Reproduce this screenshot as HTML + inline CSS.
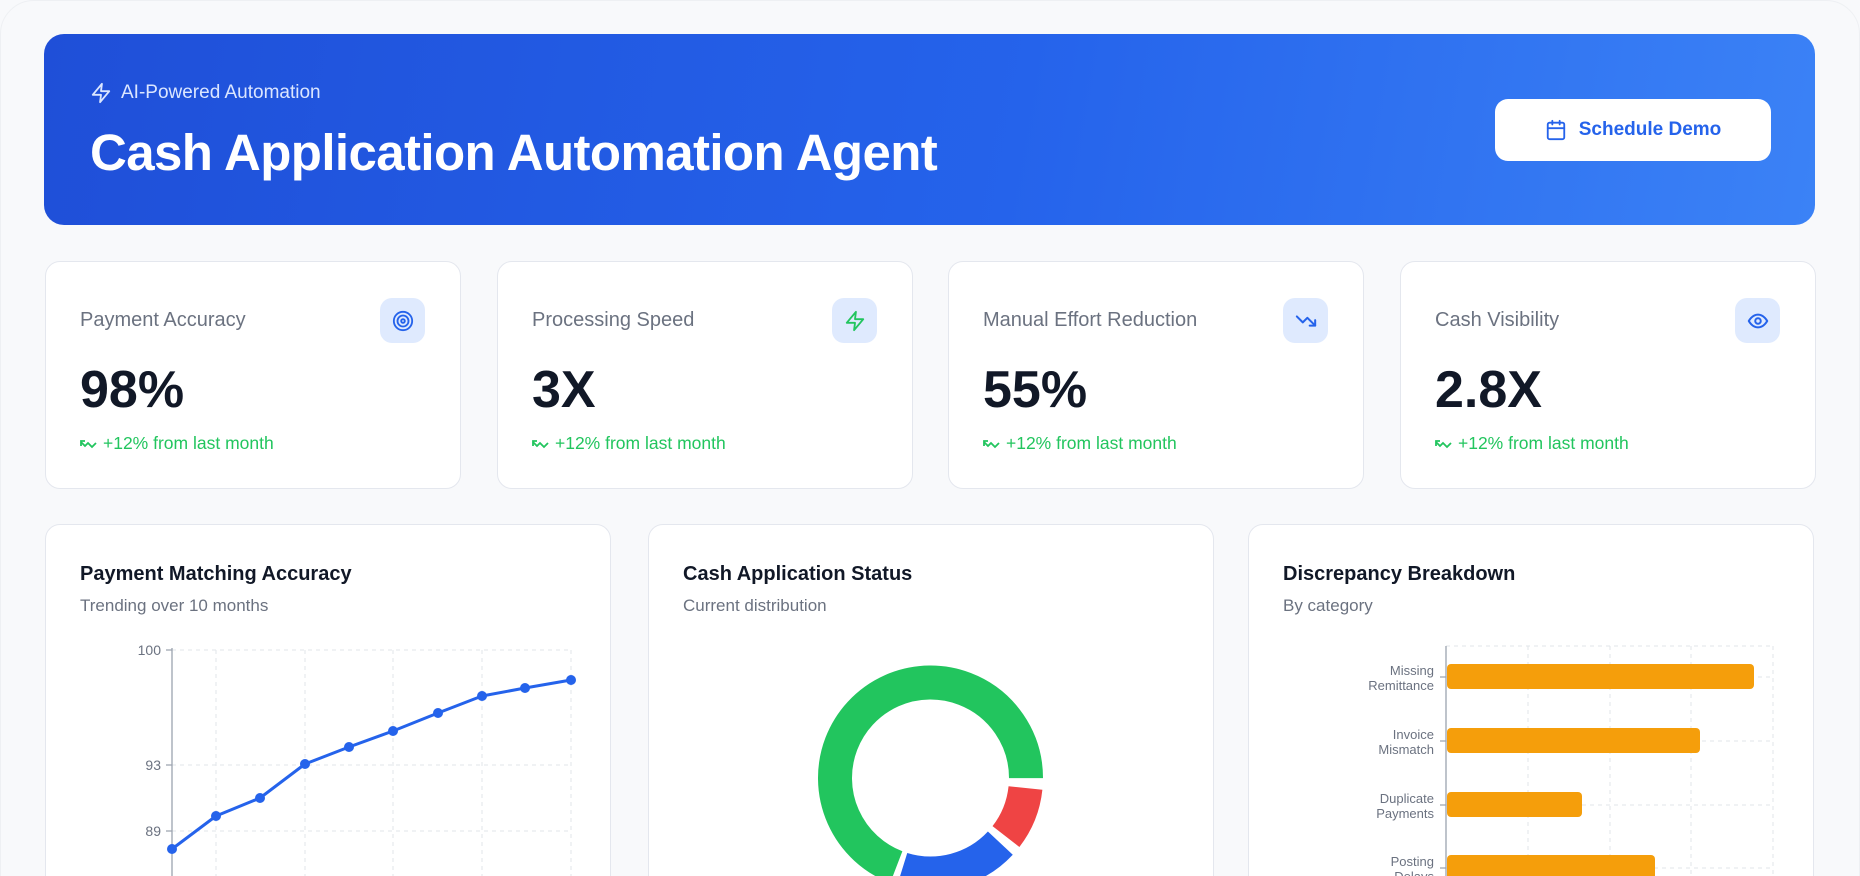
<!DOCTYPE html>
<html><head><meta charset="utf-8"><style>
*{box-sizing:border-box;margin:0;padding:0}
html,body{width:1860px;height:876px;overflow:hidden}
body{background:#f8f9fb;font-family:"Liberation Sans",sans-serif;position:relative}
.banner{position:absolute;left:44px;top:34px;width:1771px;height:191px;border-radius:20px;background:linear-gradient(100deg,#1f4fd8 0%,#2563eb 55%,#3b82f6 100%)}
.tag{position:absolute;left:90px;top:82px;color:#dbe6ff;font-size:19px;display:flex;align-items:center;gap:9px}
.title{position:absolute;left:90px;top:123px;color:#fff;font-size:51px;font-weight:bold;letter-spacing:-0.6px}
.btn{position:absolute;left:1495px;top:99px;width:276px;height:62px;background:#fff;border-radius:13px;display:flex;align-items:center;justify-content:center;gap:12px;color:#2563eb;font-size:19px;font-weight:bold}
.card{position:absolute;background:#fff;border:1.5px solid #e4e7ee;border-radius:15px}
.stat{top:261px;width:416px;height:228px}
.stat .lbl{position:absolute;left:34px;top:47px;font-size:20px;color:#6b7280}
.stat .ic{position:absolute;right:35px;top:36px;width:45px;height:45px;border-radius:12px;background:#dfeafe;display:flex;align-items:center;justify-content:center}
.stat .val{position:absolute;left:34px;top:98px;font-size:52px;font-weight:bold;color:#111827}
.stat .tr{position:absolute;left:34px;top:171px;font-size:17.5px;color:#22c55e;display:flex;align-items:center;gap:6px}
.ch{top:524px;width:566px;height:400px}
.ch h3{position:absolute;left:34px;top:38px;font-size:20px;font-weight:bold;color:#111827}
.ch p{position:absolute;left:34px;top:71px;font-size:17px;color:#6b7280}
</style></head><body>
<div style="position:absolute;left:0;top:0;width:1860px;height:940px;border:1px solid #eef0f3;border-radius:34px"></div>
<div class="banner"></div>
<div class="tag"><svg width="22" height="22" viewBox="0 0 24 24" fill="none" stroke="#dbe6ff" stroke-width="2" stroke-linejoin="round"><path d="M13 2L3 14h9l-1 8 10-12h-9l1-8z"/></svg>AI-Powered Automation</div>
<div class="title">Cash Application Automation Agent</div>
<div class="btn"><svg width="22" height="22" viewBox="0 0 24 24" fill="none" stroke="#2563eb" stroke-width="2" stroke-linecap="round"><rect x="3" y="4" width="18" height="18" rx="2"/><path d="M16 2v4M8 2v4M3 10h18"/></svg>Schedule Demo</div>

<div class="card stat" style="left:45px"><div class="lbl">Payment Accuracy</div><div class="ic"><svg width="22" height="22" viewBox="0 0 24 24" fill="none" stroke="#2563eb" stroke-width="2"><circle cx="12" cy="12" r="10"/><circle cx="12" cy="12" r="6"/><circle cx="12" cy="12" r="2"/></svg></div><div class="val">98%</div><div class="tr"><svg width="17" height="12" viewBox="0 0 17 12" fill="none" stroke="#22c55e" stroke-width="1.8"><path d="M1 4l4 4 3-3 4 4 4-4"/><path d="M1 8V3h4"/></svg>+12% from last month</div></div>
<div class="card stat" style="left:497px"><div class="lbl">Processing Speed</div><div class="ic"><svg width="22" height="22" viewBox="0 0 24 24" fill="none" stroke="#22c55e" stroke-width="2" stroke-linejoin="round"><path d="M13 2L3 14h9l-1 8 10-12h-9l1-8z"/></svg></div><div class="val">3X</div><div class="tr"><svg width="17" height="12" viewBox="0 0 17 12" fill="none" stroke="#22c55e" stroke-width="1.8"><path d="M1 4l4 4 3-3 4 4 4-4"/><path d="M1 8V3h4"/></svg>+12% from last month</div></div>
<div class="card stat" style="left:948px"><div class="lbl">Manual Effort Reduction</div><div class="ic"><svg width="22" height="22" viewBox="0 0 24 24" fill="none" stroke="#2563eb" stroke-width="2.2" stroke-linecap="round" stroke-linejoin="round"><path d="M22 17l-8.5-8.5-5 5L2 7"/><path d="M16 17h6v-6"/></svg></div><div class="val">55%</div><div class="tr"><svg width="17" height="12" viewBox="0 0 17 12" fill="none" stroke="#22c55e" stroke-width="1.8"><path d="M1 4l4 4 3-3 4 4 4-4"/><path d="M1 8V3h4"/></svg>+12% from last month</div></div>
<div class="card stat" style="left:1400px"><div class="lbl">Cash Visibility</div><div class="ic"><svg width="22" height="22" viewBox="0 0 24 24" fill="none" stroke="#2563eb" stroke-width="2.2"><path d="M2 12s3.5-7 10-7 10 7 10 7-3.5 7-10 7S2 12 2 12z"/><circle cx="12" cy="12" r="3"/></svg></div><div class="val">2.8X</div><div class="tr"><svg width="17" height="12" viewBox="0 0 17 12" fill="none" stroke="#22c55e" stroke-width="1.8"><path d="M1 4l4 4 3-3 4 4 4-4"/><path d="M1 8V3h4"/></svg>+12% from last month</div></div>

<div class="card ch" style="left:45px"><h3>Payment Matching Accuracy</h3><p>Trending over 10 months</p></div>
<div class="card ch" style="left:648px"><h3>Cash Application Status</h3><p>Current distribution</p></div>
<div class="card ch" style="left:1248px"><h3>Discrepancy Breakdown</h3><p>By category</p></div>

<svg style="position:absolute;left:0;top:0" width="1860" height="876" font-family="Liberation Sans, sans-serif">
<g stroke="#e2e5ea" stroke-dasharray="4 4" stroke-width="1">
<path d="M172 650H571M172 765H571M172 831H571M216 650V876M305 650V876M393 650V876M482 650V876M571 650V876"/>
<path d="M1446 646H1773M1528 646V876M1610 646V876M1691 646V876M1773 646V876M1446 677H1773M1446 741H1773M1446 805H1773M1446 868H1773"/>
</g>
<g stroke="#9ca3af" stroke-width="1.3"><path d="M172 648V876M166 650h6M166 765h6M166 831h6"/><path d="M1446 646V876M1440 677h6M1440 741h6M1440 805h6M1440 868h6"/></g>
<g fill="#6b7280" font-size="14" text-anchor="end"><text x="161" y="655">100</text><text x="161" y="770">93</text><text x="161" y="836">89</text></g>
<polyline fill="none" stroke="#2563eb" stroke-width="3" stroke-linejoin="round" points="172,849 216,816 260,798 305,764 349,747 393,731 438,713 482,696 525,688 571,680"/>
<g fill="#2563eb"><circle cx="172" cy="849" r="5"/><circle cx="216" cy="816" r="5"/><circle cx="260" cy="798" r="5"/><circle cx="305" cy="764" r="5"/><circle cx="349" cy="747" r="5"/><circle cx="393" cy="731" r="5"/><circle cx="438" cy="713" r="5"/><circle cx="482" cy="696" r="5"/><circle cx="525" cy="688" r="5"/><circle cx="571" cy="680" r="5"/></g>
<g fill="none" stroke-width="34">
<circle cx="930.5" cy="778" r="95.5" stroke="#22c55e" stroke-dasharray="415 185" transform="rotate(111 930.5 778)"/>
<circle cx="930.5" cy="778" r="95.5" stroke="#ef4444" stroke-dasharray="53 547" transform="rotate(6 930.5 778)"/>
<circle cx="930.5" cy="778" r="95.5" stroke="#2563eb" stroke-dasharray="107 493" transform="rotate(43 930.5 778)"/>
</g>
<g fill="#f59e0b"><rect x="1447" y="664" width="307" height="25" rx="4"/><rect x="1447" y="728" width="253" height="25" rx="4"/><rect x="1447" y="792" width="135" height="25" rx="4"/><rect x="1447" y="855" width="208" height="25" rx="4"/></g>
<g fill="#6b7280" font-size="13" text-anchor="end">
<text x="1434" y="675">Missing</text><text x="1434" y="690">Remittance</text>
<text x="1434" y="739">Invoice</text><text x="1434" y="754">Mismatch</text>
<text x="1434" y="803">Duplicate</text><text x="1434" y="818">Payments</text>
<text x="1434" y="866">Posting</text><text x="1434" y="881">Delays</text>
</g>
</svg>
</body></html>
